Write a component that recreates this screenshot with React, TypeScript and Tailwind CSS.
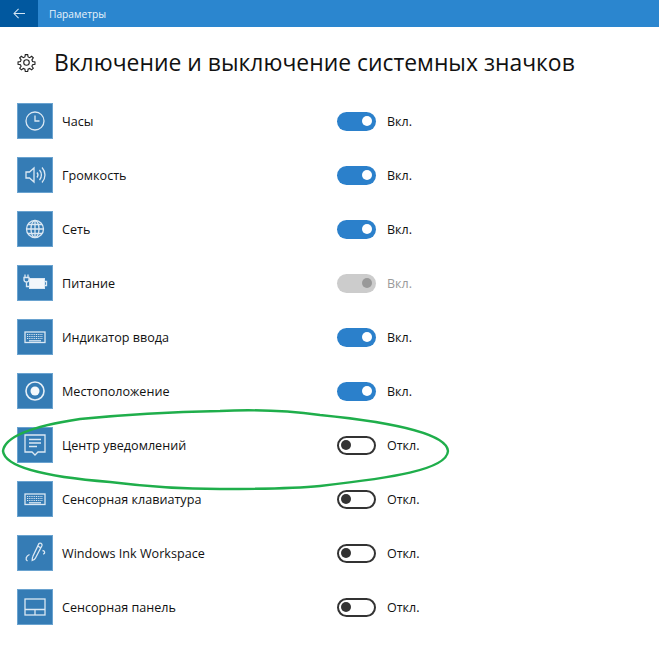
import React from "react";

const S = { fill: "none", stroke: "#dbe8f3", strokeWidth: 1.3 } as const;

function Icon({ name }: { name: string }) {
  let c: React.ReactNode = null;
  if (name === "clock")
    c = (<><circle cx="18" cy="18" r="9" {...S} /><path d="M18 12.500V18h4.500" {...S} /></>);
  if (name === "vol")
    c = (<><path d="M9 15h3.500l4.500-4v14l-4.500-4H9z" {...S} /><path d="M20 15.500a4 4 0 0 1 0 5M22.500 13a7.500 7.500 0 0 1 0 10M25 10.500a11 11 0 0 1 0 15" {...S} /></>);
  if (name === "net")
    c = (<><circle cx="18" cy="18" r="8.500" {...S} /><ellipse cx="18" cy="18" rx="4" ry="8.500" {...S} /><path d="M9.500 18h17M11 13.500h14M11 22.500h14M18 9.500v17" {...S} /></>);
  if (name === "power")
    c = (<><path d="M8 9.500v3M11 9.500v3M7 12.500h5v2a2.500 2.500 0 0 1-5 0zM9.500 17v4.500h2.500" {...S} /><rect x="12.500" y="13.500" width="15" height="10" fill="#f3f7fb" stroke="#dbe8f3" /><path d="M28 16.500h1.500v4H28" {...S} /></>);
  if (name === "kbd")
    c = (<><rect x="8" y="13" width="20" height="10.500" {...S} /><path d="M10 15.500h16M10 17.500h16M10 19.500h16" fill="none" stroke="#dbe8f3" strokeWidth="1" strokeDasharray="1 .8" /><path d="M12 21.800h12" {...S} /></>);
  if (name === "loc")
    c = (<><circle cx="18" cy="18" r="9" fill="none" stroke="#e6eff7" strokeWidth="1.600" /><circle cx="18" cy="18" r="4.500" fill="#f5f9fc" /></>);
  if (name === "note")
    c = (<><path d="M8 8h20v17h-7l-3 3-3-3H8z" {...S} /><path d="M12 12.500h12M12 16h12M12 19.500h8" {...S} /></>);
  if (name === "ink")
    c = (<><path d="M22 8.500c1-1 3.500 0 3 2L18.500 23c-.6 1.300-1.800 2-3.300 2.500 0-1.600 0-3 .7-4.300z" {...S} /><path d="M20.500 11l3.500 1.800M25.500 15.500c2.500.3 3 2.500.7 3.800M12.500 19.500c-3.500 1.500-4.500 5-2 6.500" {...S} /></>);
  if (name === "pad")
    c = (<><rect x="8" y="10" width="20" height="16" {...S} /><path d="M8 20.500h20M18 20.500V26" {...S} /></>);
  return (
    <svg viewBox="0 0 36 36" className="w-full h-full">
      {c}
    </svg>
  );
}

const rows = [
  { icon: "clock", label: "Часы", s: "on" },
  { icon: "vol", label: "Громкость", s: "on" },
  { icon: "net", label: "Сеть", s: "on" },
  { icon: "power", label: "Питание", s: "dis" },
  { icon: "kbd", label: "Индикатор ввода", s: "on" },
  { icon: "loc", label: "Местоположение", s: "on" },
  { icon: "note", label: "Центр уведомлений", s: "off" },
  { icon: "kbd", label: "Сенсорная клавиатура", s: "off" },
  { icon: "ink", label: "Windows Ink Workspace", s: "off" },
  { icon: "pad", label: "Сенсорная панель", s: "off" },
];

function Toggle({ s }: { s: string }) {
  if (s === "on")
    return (
      <div className="w-[39px] h-[19px] rounded-full bg-[#2b80cb] flex items-center justify-end pr-[4px]">
        <div className="w-[10px] h-[10px] rounded-full bg-white" />
      </div>
    );
  if (s === "dis")
    return (
      <div className="w-[39px] h-[19px] rounded-full bg-[#cccccc] flex items-center justify-end pr-[4px]">
        <div className="w-[10px] h-[10px] rounded-full bg-[#999999]" />
      </div>
    );
  return (
    <div className="w-[39px] h-[19px] rounded-full border-2 border-[#333333] bg-white flex items-center pl-[2px]">
      <div className="w-[10px] h-[10px] rounded-full bg-[#333333]" />
    </div>
  );
}

export default function App() {
  return (
    <div className="relative w-[659px] h-[659px] bg-white overflow-hidden font-['Open_Sans','Noto_Sans',sans-serif]">
      <div className="flex h-[27px] bg-[#2b86cf] items-center">
        <div className="w-[38px] h-full bg-[#01589f] flex items-center justify-center">
          <svg viewBox="0 0 14 12" className="w-[13px] h-[11px]">
            <path d="M13 6H1.500M6 1L1 6l5 5" fill="none" stroke="#d5e6f4" strokeWidth="1.100" />
          </svg>
        </div>
        <div className="pl-[11px] pt-[3px] text-[10.200px] text-[#e8f2fa]">Параметры</div>
      </div>
      <div className="flex items-center h-[67px] pl-[17px]">
        <svg viewBox="0 0 24 24" className="w-[19px] h-[19px] mt-[3px]" fill="none" stroke="#222" strokeWidth="1.400">
          <path d="M10.500 2h3l.5 3 2 .9 2.500-1.800 2.100 2.100-1.800 2.500.9 2 3 .5v3l-3 .5-.9 2 1.800 2.500-2.100 2.100-2.500-1.800-2 .9-.5 3h-3l-.5-3-2-.9-2.500 1.800-2.100-2.100 1.800-2.500-.9-2-3-.5v-3l3-.5.9-2-1.800-2.500 2.100-2.100 2.500 1.800 2-.9z" />
          <circle cx="12" cy="12" r="3.500" />
        </svg>
        <h1 className="ml-[18px] mt-[5px] text-[22.900px] leading-none font-normal text-[#111111] whitespace-nowrap">
          Включение и выключение системных значков
        </h1>
      </div>
      <div className="flex flex-col">
        {rows.map((r) => (
          <div key={r.label} className="flex items-center h-[54px] pl-[17px]">
            <div className="w-9 h-9 bg-[#357cb5] border border-[#6aa3d0]">
              <div className="-m-px w-9 h-9">
                <Icon name={r.icon} />
              </div>
            </div>
            <div className="ml-[9px] w-[275px] mt-[2px] text-[12.600px] text-[#111111] whitespace-nowrap">{r.label}</div>
            <Toggle s={r.s} />
            <div className={`ml-[11px] mt-[2px] text-[12.500px] ${r.s === "dis" ? "text-[#9a9a9a]" : "text-[#111111]"}`}>
              {r.s === "off" ? "Откл." : "Вкл."}
            </div>
          </div>
        ))}
      </div>
      <svg viewBox="0 0 659 659" className="absolute inset-0 w-[659px] h-[659px] pointer-events-none">
        <path
          d="M448 451C447 435 400 423 320 415C290 411 260 409 220 411C170 412 120 415 80 419C40 425 5 435 3 451C5 470 60 478 110 482C150 487 190 489 220 489C260 489 290 489 320 486C390 478 447 470 448 451Z"
          fill="none"
          stroke="#1fae4b"
          strokeWidth="2.400"
        />
      </svg>
    </div>
  );
}
